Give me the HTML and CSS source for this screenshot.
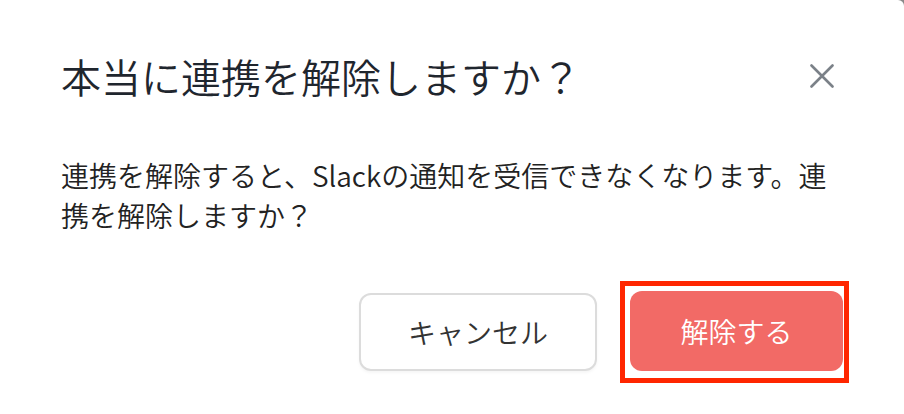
FILE: index.html
```html
<!DOCTYPE html>
<html lang="ja">
<head>
  <meta charset="UTF-8">
  <meta name="viewport" content="width=device-width, initial-scale=1.0">
  <title>連携の解除</title>
  <link rel="stylesheet" href="styles.css">
</head>
<body>
  <div class="modal">
    <div class="modal-header">
      <h1 class="modal-title">本当に連携を解除しますか？</h1>
      <button type="button" class="close-btn" aria-label="閉じる">
        <svg width="24" height="24" viewBox="0 0 24 24">
          <path d="M1.5 1.5 L22.5 22.5 M22.5 1.5 L1.5 22.5" stroke="#7b8188" stroke-width="2.6" stroke-linecap="round" fill="none"/>
        </svg>
      </button>
    </div>

    <div class="modal-body">
      <p>連携を解除すると、Slackの通知を受信できなくなります。連携を解除しますか？</p>
    </div>

    <div class="modal-footer">
      <button type="button" class="btn btn-cancel">キャンセル</button>
      <span class="highlight">
        <button type="button" class="btn btn-danger">解除する</button>
      </span>
    </div>
  </div>
</body>
</html>
```

FILE: styles.css
```css
* {
  box-sizing: border-box;
  margin: 0;
  padding: 0;
}

html {
  background: #8a8a8a;
}

body {
  font-family: "Noto Sans CJK JP", "Noto Sans", sans-serif;
  margin: 0;
  width: 904px;
  height: 414px;
  overflow: hidden;
}

.modal {
  background: white;
  height: 414px;
  border-top-right-radius: 6px;
}

.modal-header {
  display: flex;
  justify-content: space-between;
  align-items: center;
  padding: 50px 70px 0 61px;
}

.modal-title {
  font-size: 40px;
  line-height: 52px;
  font-weight: 350;
  color: #1f262e;
}

.close-btn {
  background: none;
  border: none;
  width: 24px;
  height: 24px;
  cursor: pointer;
  display: flex;
}

.modal-body {
  padding: 53px 61px 0 61px;
}

.modal-body p {
  font-size: 28px;
  line-height: 40px;
  font-weight: 350;
  color: #222;
}

.modal-footer {
  display: flex;
  justify-content: flex-end;
  align-items: center;
  gap: 23px;
  padding: 46px 55px 0 0;
}

.btn {
  font-family: inherit;
  font-size: 28px;
  font-weight: 350;
  border-radius: 12px;
  cursor: pointer;
}

.btn-cancel {
  width: 238px;
  height: 78px;
  background: white;
  color: #333;
  border: 2px solid #dcdcdc;
  box-shadow: 0 2px 3px rgba(0, 0, 0, 0.04);
}

.btn-danger {
  display: block;
  width: 213px;
  height: 80px;
  background: #f26a66;
  color: white;
  border: none;
}

.highlight {
  display: block;
  border: 5px solid #ff2600;
  padding: 5px 1px 7px 5px;
}
```
